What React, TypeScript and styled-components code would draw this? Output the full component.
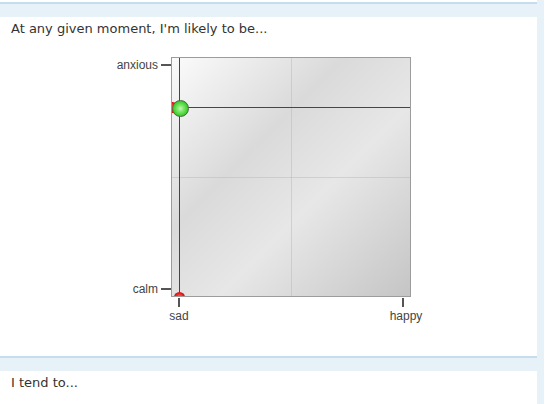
import React from "react";
import styled, { createGlobalStyle } from "styled-components";

const Global = createGlobalStyle`
  html, body { margin: 0; padding: 0; background: #ffffff; }
  body { font-family: "DejaVu Sans", Verdana, sans-serif; }
`;

const Page = styled.div`
  display: flex;
  min-height: 404px;
`;

const Main = styled.div`
  width: 537px;
  display: flex;
  flex-direction: column;
  padding-top: 2px;
`;

const Strip = styled.div`
  width: 7px;
  background: #e7f1f8;
`;

const Section = styled.section<{ $grow?: boolean }>`
  border-top: 2px solid #c5ddec;
  display: flex;
  flex-direction: column;
  flex: ${(p) => (p.$grow ? "1" : "none")};
`;

const SectionHead = styled.div`
  height: 13px;
  background: #e7f1f8;
`;

const Question = styled.div`
  font-family: "DejaVu Sans", Verdana, sans-serif;
  font-size: 13px;
  line-height: 20px;
  color: #333;
  padding: 2px 11px 0;
`;

const ChartRow = styled.div`
  padding: 18px 0 29px 107px;
`;

const Widget = styled.div`
  display: grid;
  grid-template-columns: 64px 240px;
  grid-template-rows: 240px 30px;
  font-family: "Liberation Sans", Arial, sans-serif;
  font-size: 12px;
  color: #444;
`;

const YAxis = styled.div`
  display: flex;
  flex-direction: column;
  justify-content: space-between;
  padding: 1px 0;
`;

const YItem = styled.div`
  display: flex;
  align-items: center;
  justify-content: flex-end;
  gap: 3px;
  height: 14px;
  white-space: nowrap;
`;

const HTick = styled.span`
  width: 10px;
  height: 2px;
  background: #555;
`;

const XAxis = styled.div`
  grid-column: 2;
  display: grid;
  grid-template-columns: 16px 1fr 16px;
  padding-top: 1px;
`;

const XItem = styled.div<{ $col: number; $shift?: number }>`
  grid-column: ${(p) => p.$col};
  display: flex;
  flex-direction: column;
  align-items: center;
  gap: 2px;
  white-space: nowrap;
  line-height: 14px;
  & > span:last-child {
    transform: translateX(${(p) => p.$shift ?? 0}px);
  }
`;

const VTick = styled.span`
  width: 2px;
  height: 9px;
  background: #555;
`;

const Box = styled.div`
  position: relative;
  box-sizing: border-box;
  width: 240px;
  height: 240px;
  border: 1px solid #9c9c9c;
  overflow: hidden;
  background:
    linear-gradient(to right, transparent 119px, rgba(185, 185, 185, 0.5) 119px, rgba(185, 185, 185, 0.5) 120px, transparent 120px),
    linear-gradient(to bottom, transparent 119px, rgba(185, 185, 185, 0.5) 119px, rgba(185, 185, 185, 0.5) 120px, transparent 120px),
    linear-gradient(135deg, #fbfbfb 0%, #dadada 36%, #e7e7e7 60%, #c5c5c5 100%);
`;

const RedV = styled.div`
  position: absolute;
  top: 0;
  bottom: 0;
  width: 1px;
  background: #e3000f;
`;

const RedH = styled.div`
  position: absolute;
  left: 0;
  right: 0;
  height: 1px;
  background: #e3000f;
`;

const Marker = styled.div`
  position: absolute;
  width: 11px;
  height: 11px;
  margin: -5px 0 0 -5px;
  border-radius: 50%;
  background: radial-gradient(circle, #ff7474 0%, #e81010 60%, #c40000 100%);
`;

const Ball = styled.div`
  position: absolute;
  width: 15px;
  height: 15px;
  margin: -8px 0 0 -8px;
  border-radius: 50%;
  border: 1px solid #3f6e38;
  background: radial-gradient(circle at 50% 50%, #c4f8b4 0%, #7ee86a 30%, #3fcf2e 65%, #2ea322 100%);
  z-index: 2;
`;

export default function App() {
  const vx = 7;
  const hy = 49;
  return (
    <>
      <Global />
      <Page>
        <Main>
          <Section>
            <SectionHead />
            <Question>At any given moment, I'm likely to be...</Question>
            <ChartRow>
              <Widget>
                <YAxis>
                  <YItem>
                    anxious
                    <HTick />
                  </YItem>
                  <YItem>
                    calm
                    <HTick />
                  </YItem>
                </YAxis>
                <Box>
                  <RedV style={{ left: vx }} />
                  <RedH style={{ top: hy }} />
                  <Marker style={{ left: vx, top: 239 }} />
                  <Marker style={{ left: 0, top: hy }} />
                  <Ball style={{ left: vx + 1, top: hy + 1 }} />
                </Box>
                <XAxis>
                  <XItem $col={1}>
                    <VTick />
                    <span>sad</span>
                  </XItem>
                  <XItem $col={3} $shift={3}>
                    <VTick />
                    <span>happy</span>
                  </XItem>
                </XAxis>
              </Widget>
            </ChartRow>
          </Section>
          <Section $grow>
            <SectionHead />
            <Question>I tend to...</Question>
          </Section>
        </Main>
        <Strip />
      </Page>
    </>
  );
}
